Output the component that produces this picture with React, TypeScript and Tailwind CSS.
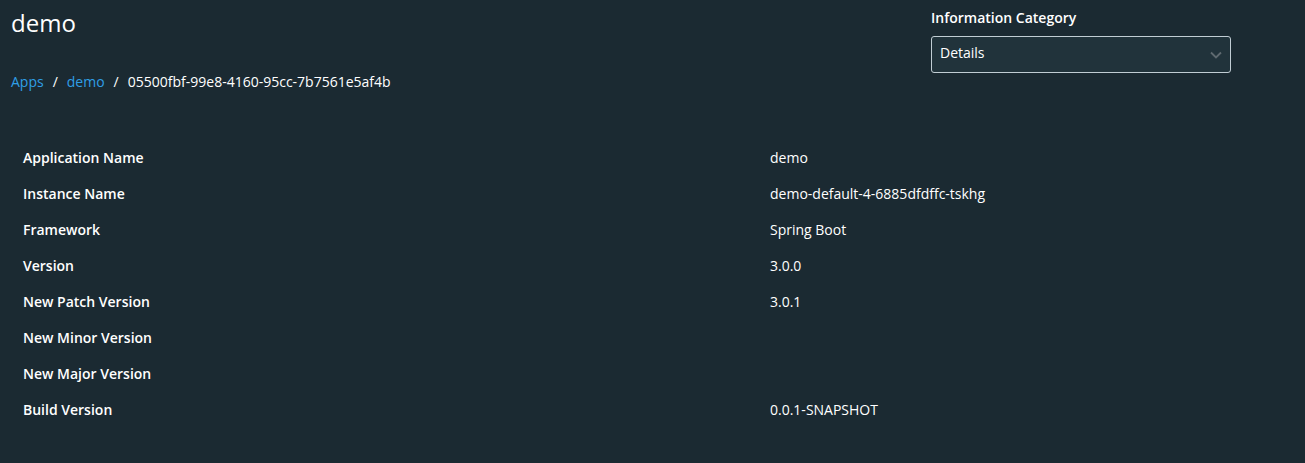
import { useState } from "react"

const rows: [string, string][] = [
  ["Application Name", "demo"],
  ["Instance Name", "demo-default-4-6885dfdffc-tskhg"],
  ["Framework", "Spring Boot"],
  ["Version", "3.0.0"],
  ["New Patch Version", "3.0.1"],
  ["New Minor Version", ""],
  ["New Major Version", ""],
  ["Build Version", "0.0.1-SNAPSHOT"],
]

export default function App() {
  const [category, setCategory] = useState("Details")

  return (
    <div className="min-h-[463px] bg-[#1b2a32] text-[#e9ecef] font-['Open_Sans','Lato',sans-serif]">
      <div className="flex justify-between pl-[11px] pr-[74px]">
        <div>
          <h1 className="pt-[8px] text-[24px] leading-[30px] font-normal text-white">demo</h1>
          <nav className="mt-[34px] flex items-center gap-[9px] text-[14px] leading-[20px]">
            <a href="#" className="text-[#2f9fe6]">Apps</a>
            <span className="text-white">/</span>
            <a href="#" className="text-[#2f9fe6]">demo</a>
            <span className="text-white">/</span>
            <span className="text-white">05500fbf-99e8-4160-95cc-7b7561e5af4b</span>
          </nav>
        </div>
        <div className="pt-[8px]">
          <label className="block text-[14px] leading-[20px] font-semibold text-white">Information Category</label>
          <div className="relative mt-[8px] w-[300px]">
            <select
              value={category}
              onChange={(e) => setCategory(e.target.value)}
              className="h-[37px] w-full appearance-none rounded-[3px] border border-[#c1cdd4] bg-[#21333b] pb-[4px] pl-[8px] pr-8 text-[14px] text-white outline-none"
            >
              <option>Details</option>
              <option>Health</option>
              <option>Metrics</option>
            </select>
            <svg
              className="pointer-events-none absolute right-[9px] top-[15px]"
              width="12"
              height="8"
              viewBox="0 0 12 8"
              fill="none"
            >
              <path d="M1 1.5 L6 6.5 L11 1.5" stroke="#5f6a70" strokeWidth="1.8" />
            </svg>
          </div>
        </div>
      </div>

      <div className="mt-[48px] px-[23px] text-[14px] leading-[20px]">
        {rows.map(([label, value]) => (
          <div key={label} className="flex h-[36px] items-center">
            <div className="w-[747px] font-semibold text-white">{label}</div>
            <div className="text-white">{value}</div>
          </div>
        ))}
      </div>
    </div>
  )
}
